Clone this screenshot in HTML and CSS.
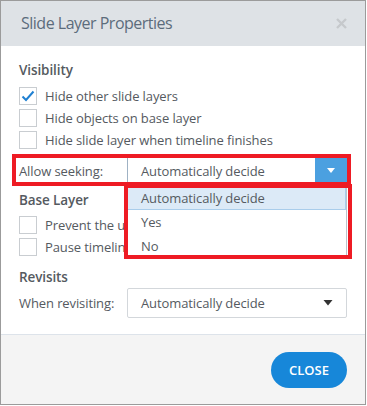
FILE: index.html
```html
<!DOCTYPE html>
<html>
<head>
<meta charset="utf-8">
<link rel="stylesheet" href="styles.css">
</head>
<body>
<div class="dialog">
  <div class="header">
    <span class="title">Slide Layer Properties</span>
    <svg class="close-x" width="11" height="11" viewBox="0 0 11 11"><path d="M1 1 L10 10 M10 1 L1 10" stroke="#c6c9cc" stroke-width="2.4" fill="none"/></svg>
  </div>
  <div class="content">
    <div class="heading">Visibility</div>
    <div class="check-row"><span class="box"><svg width="14" height="12" viewBox="0 0 14 12"><path d="M1.5 6.5 L5 10 L12.5 1.5" stroke="#1f80d2" stroke-width="2" fill="none"/></svg></span><span>Hide other slide layers</span></div>
    <div class="check-row"><span class="box"></span><span>Hide objects on base layer</span></div>
    <div class="check-row"><span class="box"></span><span>Hide slide layer when timeline finishes</span></div>
    <div class="field-row seek-row">
      <span class="label">Allow seeking:</span>
      <div class="select open">
        <span class="value">Automatically decide</span>
        <span class="btn"><svg width="10" height="6" viewBox="0 0 10 6"><path d="M1 0 L9 0 L5 5 Z" fill="#fff"/></svg></span>
      </div>
      <div class="dropdown">
        <div class="opt active">Automatically decide</div>
        <div class="opt">Yes</div>
        <div class="opt">No</div>
      </div>
      <div class="mark mark-row"></div>
      <div class="mark mark-list"></div>
    </div>
    <div class="heading h-base">Base Layer</div>
    <div class="check-row"><span class="box"></span><span class="clip">Prevent the us</span></div>
    <div class="check-row"><span class="box"></span><span class="clip">Pause timeline</span></div>
    <div class="heading h-rev">Revisits</div>
    <div class="field-row">
      <span class="label">When revisiting:</span>
      <div class="select plain">
        <span class="value">Automatically decide</span>
        <span class="caret"><svg width="10" height="6" viewBox="0 0 10 6"><path d="M0.5 0 L9.5 0 L5 5.5 Z" fill="#333"/></svg></span>
      </div>
    </div>
  </div>
  <div class="footer">
    <button class="close-btn">CLOSE</button>
  </div>
</div>
</body>
</html>
```
FILE: styles.css
```css
html, body {
  margin: 0;
  padding: 0;
  background: #fff;
}
body {
  font-family: "Open Sans", "Noto Sans", sans-serif;
  font-size: 13px;
  letter-spacing: -0.1px;
  color: #555a5f;
}
.dialog {
  width: 366px;
  height: 405px;
  box-sizing: border-box;
  border: 1px solid #9b9b9b;
  display: flex;
  flex-direction: column;
  overflow: hidden;
}
.header {
  height: 45px;
  flex: none;
  background: #dee2e6;
  display: flex;
  align-items: center;
  justify-content: space-between;
  padding: 0 18px 0 20px;
}
.title {
  font-size: 16px;
  color: #5c6c7c;
  letter-spacing: -0.5px;
  margin-top: -2px;
}
.close-x {
  margin-top: -1px;
}
.content {
  flex: 1;
  padding: 14px 18px 0 18px;
  display: flex;
  flex-direction: column;
}
.heading {
  height: 20px;
  line-height: 20px;
  font-weight: 600;
  font-size: 13.5px;
  color: #555a5f;
  margin-bottom: 5px;
}
.check-row {
  height: 22px;
  display: flex;
  align-items: center;
  gap: 8px;
}
.clip {
  white-space: nowrap;
}
.box {
  width: 16px;
  height: 16px;
  border: 1px solid #c9cdd1;
  background: #fff;
  display: flex;
  align-items: center;
  justify-content: center;
  flex: none;
}
.field-row {
  display: flex;
  align-items: center;
  height: 30px;
  position: relative;
}
.seek-row {
  margin-top: 5px;
  height: 30px;
}
.label {
  width: 108px;
  flex: none;
}
.select {
  width: 220px;
  box-sizing: border-box;
  display: flex;
  align-items: center;
  justify-content: space-between;
  background: #fff;
}
.select.open {
  height: 28px;
  border: 1px solid #9fb2c4;
  border-right: none;
}
.select.plain {
  height: 30px;
  border: 1px solid #d3d7db;
  border-radius: 2px;
}
.value {
  padding-left: 13px;
}
.btn {
  width: 32px;
  align-self: stretch;
  background: #4ba0e0;
  display: flex;
  align-items: center;
  justify-content: center;
}
.caret {
  padding-right: 13px;
  display: flex;
}
.dropdown {
  position: absolute;
  left: 108px;
  top: 29px;
  width: 220px;
  box-sizing: border-box;
  border: 1px solid #b9c3cc;
  background: #fff;
  z-index: 2;
}
.opt {
  height: 24px;
  line-height: 24px;
  padding-left: 13px;
}
.opt.active {
  background: #dceaf7;
  box-shadow: inset -1px -1px 0 #a9cdeb;
}
.mark {
  position: absolute;
  border: 4px solid #ee1b24;
  box-sizing: border-box;
  z-index: 3;
}
.mark-row {
  left: -7px;
  top: -2px;
  width: 339px;
  height: 32px;
}
.mark-list {
  left: 105px;
  top: 28px;
  width: 228px;
  height: 75px;
}
.h-base {
  margin-top: 4px;
  margin-bottom: 4px;
}
.h-rev {
  margin-top: 9px;
  margin-bottom: 1px;
}
.footer {
  height: 70px;
  flex: none;
  box-sizing: border-box;
  border-top: 1px solid #dde3ea;
  background: #f4f4f4;
  display: flex;
  justify-content: flex-end;
  align-items: flex-start;
  padding: 17px 18px 0 0;
}
.close-btn {
  width: 76px;
  height: 36px;
  border: none;
  border-radius: 18px;
  background: #1787d9;
  color: #fff;
  font-family: "Open Sans", "Noto Sans", sans-serif;
  font-weight: 600;
  font-size: 13px;
  letter-spacing: 0;
  padding: 0;
}
```
